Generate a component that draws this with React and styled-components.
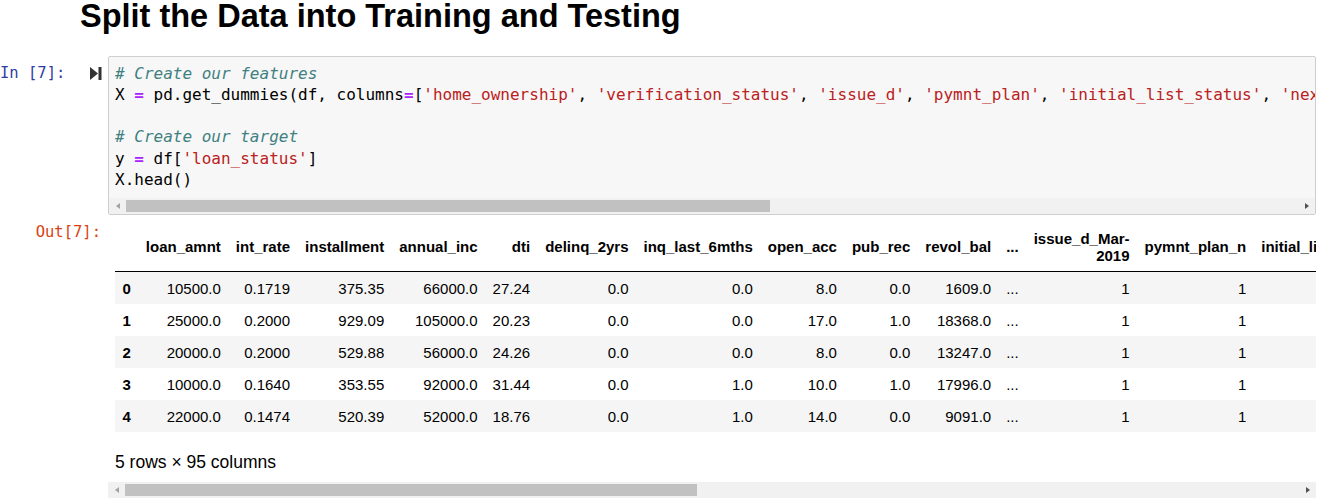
import React from 'react';
import styled, { createGlobalStyle } from 'styled-components';

const GlobalStyle = createGlobalStyle`
  html, body {
    margin: 0;
    padding: 0;
    overflow: hidden;
    background: #fff;
  }
  body {
    font-family: "Liberation Sans", Arial, sans-serif;
  }
`;

const MONO = '"DejaVu Sans Mono", "Liberation Mono", monospace';

const Page = styled.div`
  width: 1316px;
`;

const Title = styled.h1`
  margin: 0 0 22.5px 80px;
  font: bold 32.5px/33px "Liberation Sans", Arial, sans-serif;
  color: #000;
`;

const Cell = styled.div`
  display: flex;
  align-items: flex-start;
`;

const Prompt = styled.div`
  flex: none;
  width: 108px;
  box-sizing: border-box;
  display: flex;
  align-items: flex-start;
  justify-content: ${p => (p.$out ? 'flex-end' : 'flex-start')};
  padding-top: 7px;
  padding-right: ${p => (p.$out ? 7 : 0)}px;
  font-family: ${MONO};
  font-size: 15.5px;
  line-height: 21.25px;
  color: ${p => p.$color};
  white-space: pre;
`;

const RunIcon = styled.svg`
  margin-left: 25px;
  margin-top: 4.5px;
  flex: none;
`;

const InputArea = styled.div`
  flex: 1;
  min-width: 0;
  border: 1px solid #cfcfcf;
  border-radius: 2px;
  background: #f7f7f7;
  overflow: hidden;
`;

const CodeBlock = styled.div`
  padding: 6px 0 8px 6px;
  font-family: ${MONO};
  font-size: 16px;
  line-height: 21.25px;
  color: #000;
  white-space: pre;
  overflow: hidden;
`;

const CodeLine = styled.div`
  height: 21.25px;
`;

const Comment = styled.span`
  color: #408080;
  font-style: italic;
`;

const Op = styled.span`
  color: #aa22ff;
  font-weight: bold;
`;

const Str = styled.span`
  color: #ba2121;
`;

const ScrollBar = styled.div`
  display: flex;
  align-items: center;
  height: 16px;
  background: #f1f1f1;
`;

const ArrowBox = styled.div`
  flex: none;
  width: 17px;
  height: 16px;
  display: flex;
  align-items: center;
  justify-content: center;
`;

const Arrow = styled.div`
  width: 0;
  height: 0;
  border-top: 3.5px solid transparent;
  border-bottom: 3.5px solid transparent;
  ${p => (p.$dir === 'left'
    ? `border-right: 4px solid ${p.$color};`
    : `border-left: 4px solid ${p.$color};`)}
`;

const Thumb = styled.div`
  flex: none;
  height: 12px;
  background: #c1c1c1;
  width: ${p => p.$w}px;
`;

const Fill = styled.div`
  flex: 1;
`;

const OutputArea = styled.div`
  flex: 1;
  min-width: 0;
`;

const ScrollBox = styled.div`
  overflow: hidden;
  padding: 7px 0 7px 7px;
`;

const Table = styled.table`
  border-collapse: collapse;
  border: none;
  font-family: "Liberation Sans", Arial, sans-serif;
  font-size: 15px;
  color: #000;

  th, td {
    text-align: right;
    vertical-align: middle;
    padding: 7.5px;
    line-height: 17px;
    white-space: normal;
    border: none;
  }
  th {
    font-weight: bold;
  }
  thead th {
    border-bottom: 1px solid #000;
  }
  tbody tr:nth-child(odd) {
    background: #f5f5f5;
  }
`;

const Caption = styled.p`
  margin: 17.5px 0 0;
  font-size: 17.5px;
  line-height: 25px;
  color: #000;
`;

function Scroller({ thumb }) {
  return (
    <ScrollBar>
      <ArrowBox>
        <Arrow $dir="left" $color="#a3a3a3" />
      </ArrowBox>
      <Thumb $w={thumb} />
      <Fill />
      <ArrowBox>
        <Arrow $dir="right" $color="#505050" />
      </ArrowBox>
    </ScrollBar>
  );
}

const columns = [
  'loan_amnt', 'int_rate', 'installment', 'annual_inc', 'dti', 'delinq_2yrs',
  'inq_last_6mths', 'open_acc', 'pub_rec', 'revol_bal', '...',
  'issue_d_Mar-2019', 'pymnt_plan_n', 'initial_list_status_f',
  'initial_list_status_w', 'next_pymnt_d_Apr-2019', 'next_pymnt_d_May-2019',
  'application_type_Individual', 'application_type_Joint App',
  'hardship_flag_N', 'debt_settlement_flag_N',
];

const tail = ['1', '1', '0', '1', '0', '1', '1', '0', '1', '1'];

const rows = [
  ['10500.0', '0.1719', '375.35', '66000.0', '27.24', '0.0', '0.0', '8.0', '0.0', '1609.0'],
  ['25000.0', '0.2000', '929.09', '105000.0', '20.23', '0.0', '0.0', '17.0', '1.0', '18368.0'],
  ['20000.0', '0.2000', '529.88', '56000.0', '24.26', '0.0', '0.0', '8.0', '0.0', '13247.0'],
  ['10000.0', '0.1640', '353.55', '92000.0', '31.44', '0.0', '1.0', '10.0', '1.0', '17996.0'],
  ['22000.0', '0.1474', '520.39', '52000.0', '18.76', '0.0', '1.0', '14.0', '0.0', '9091.0'],
];

// let headers like "issue_d_Mar-2019" wrap after the hyphen
function Header({ name }) {
  const i = name.indexOf('-');
  if (i < 0) return name;
  return (
    <>
      {name.slice(0, i + 1)}
      <wbr />
      {name.slice(i + 1)}
    </>
  );
}

export default function App() {
  return (
    <Page>
      <GlobalStyle />
      <Title>Split the Data into Training and Testing</Title>

      <Cell>
        <Prompt $color="#303f9f">
          In [7]:
          <RunIcon width="12" height="13" viewBox="0 0 12 13">
            <polygon points="0,0 8,6.5 0,13" fill="#333" />
            <rect x="8.5" y="0" width="3" height="13" fill="#333" />
          </RunIcon>
        </Prompt>
        <InputArea>
          <CodeBlock>
            <CodeLine><Comment># Create our features</Comment></CodeLine>
            <CodeLine>
              X <Op>=</Op> pd.get_dummies(df, columns<Op>=</Op>[
              <Str>'home_ownership'</Str>, <Str>'verification_status'</Str>, <Str>'issue_d'</Str>,{' '}
              <Str>'pymnt_plan'</Str>, <Str>'initial_list_status'</Str>, <Str>'next_pymnt_d'</Str>,{' '}
              <Str>'application_type'</Str>, <Str>'hardship_flag'</Str>, <Str>'debt_settlement_flag'</Str>])
            </CodeLine>
            <CodeLine />
            <CodeLine><Comment># Create our target</Comment></CodeLine>
            <CodeLine>
              y <Op>=</Op> df[<Str>'loan_status'</Str>]
            </CodeLine>
            <CodeLine>X.head()</CodeLine>
          </CodeBlock>
          <Scroller thumb={644} />
        </InputArea>
      </Cell>

      <Cell>
        <Prompt $out $color="#d84315">Out[7]:</Prompt>
        <OutputArea>
          <ScrollBox>
            <Table>
              <thead>
                <tr>
                  <th />
                  {columns.map(c => (
                    <th key={c}><Header name={c} /></th>
                  ))}
                </tr>
              </thead>
              <tbody>
                {rows.map((r, i) => (
                  <tr key={i}>
                    <th>{i}</th>
                    {r.map((v, j) => <td key={j}>{v}</td>)}
                    <td>...</td>
                    {tail.map((v, j) => <td key={'t' + j}>{v}</td>)}
                  </tr>
                ))}
              </tbody>
            </Table>
            <Caption>5 rows × 95 columns</Caption>
          </ScrollBox>
          <Scroller thumb={572} />
        </OutputArea>
      </Cell>
    </Page>
  );
}
